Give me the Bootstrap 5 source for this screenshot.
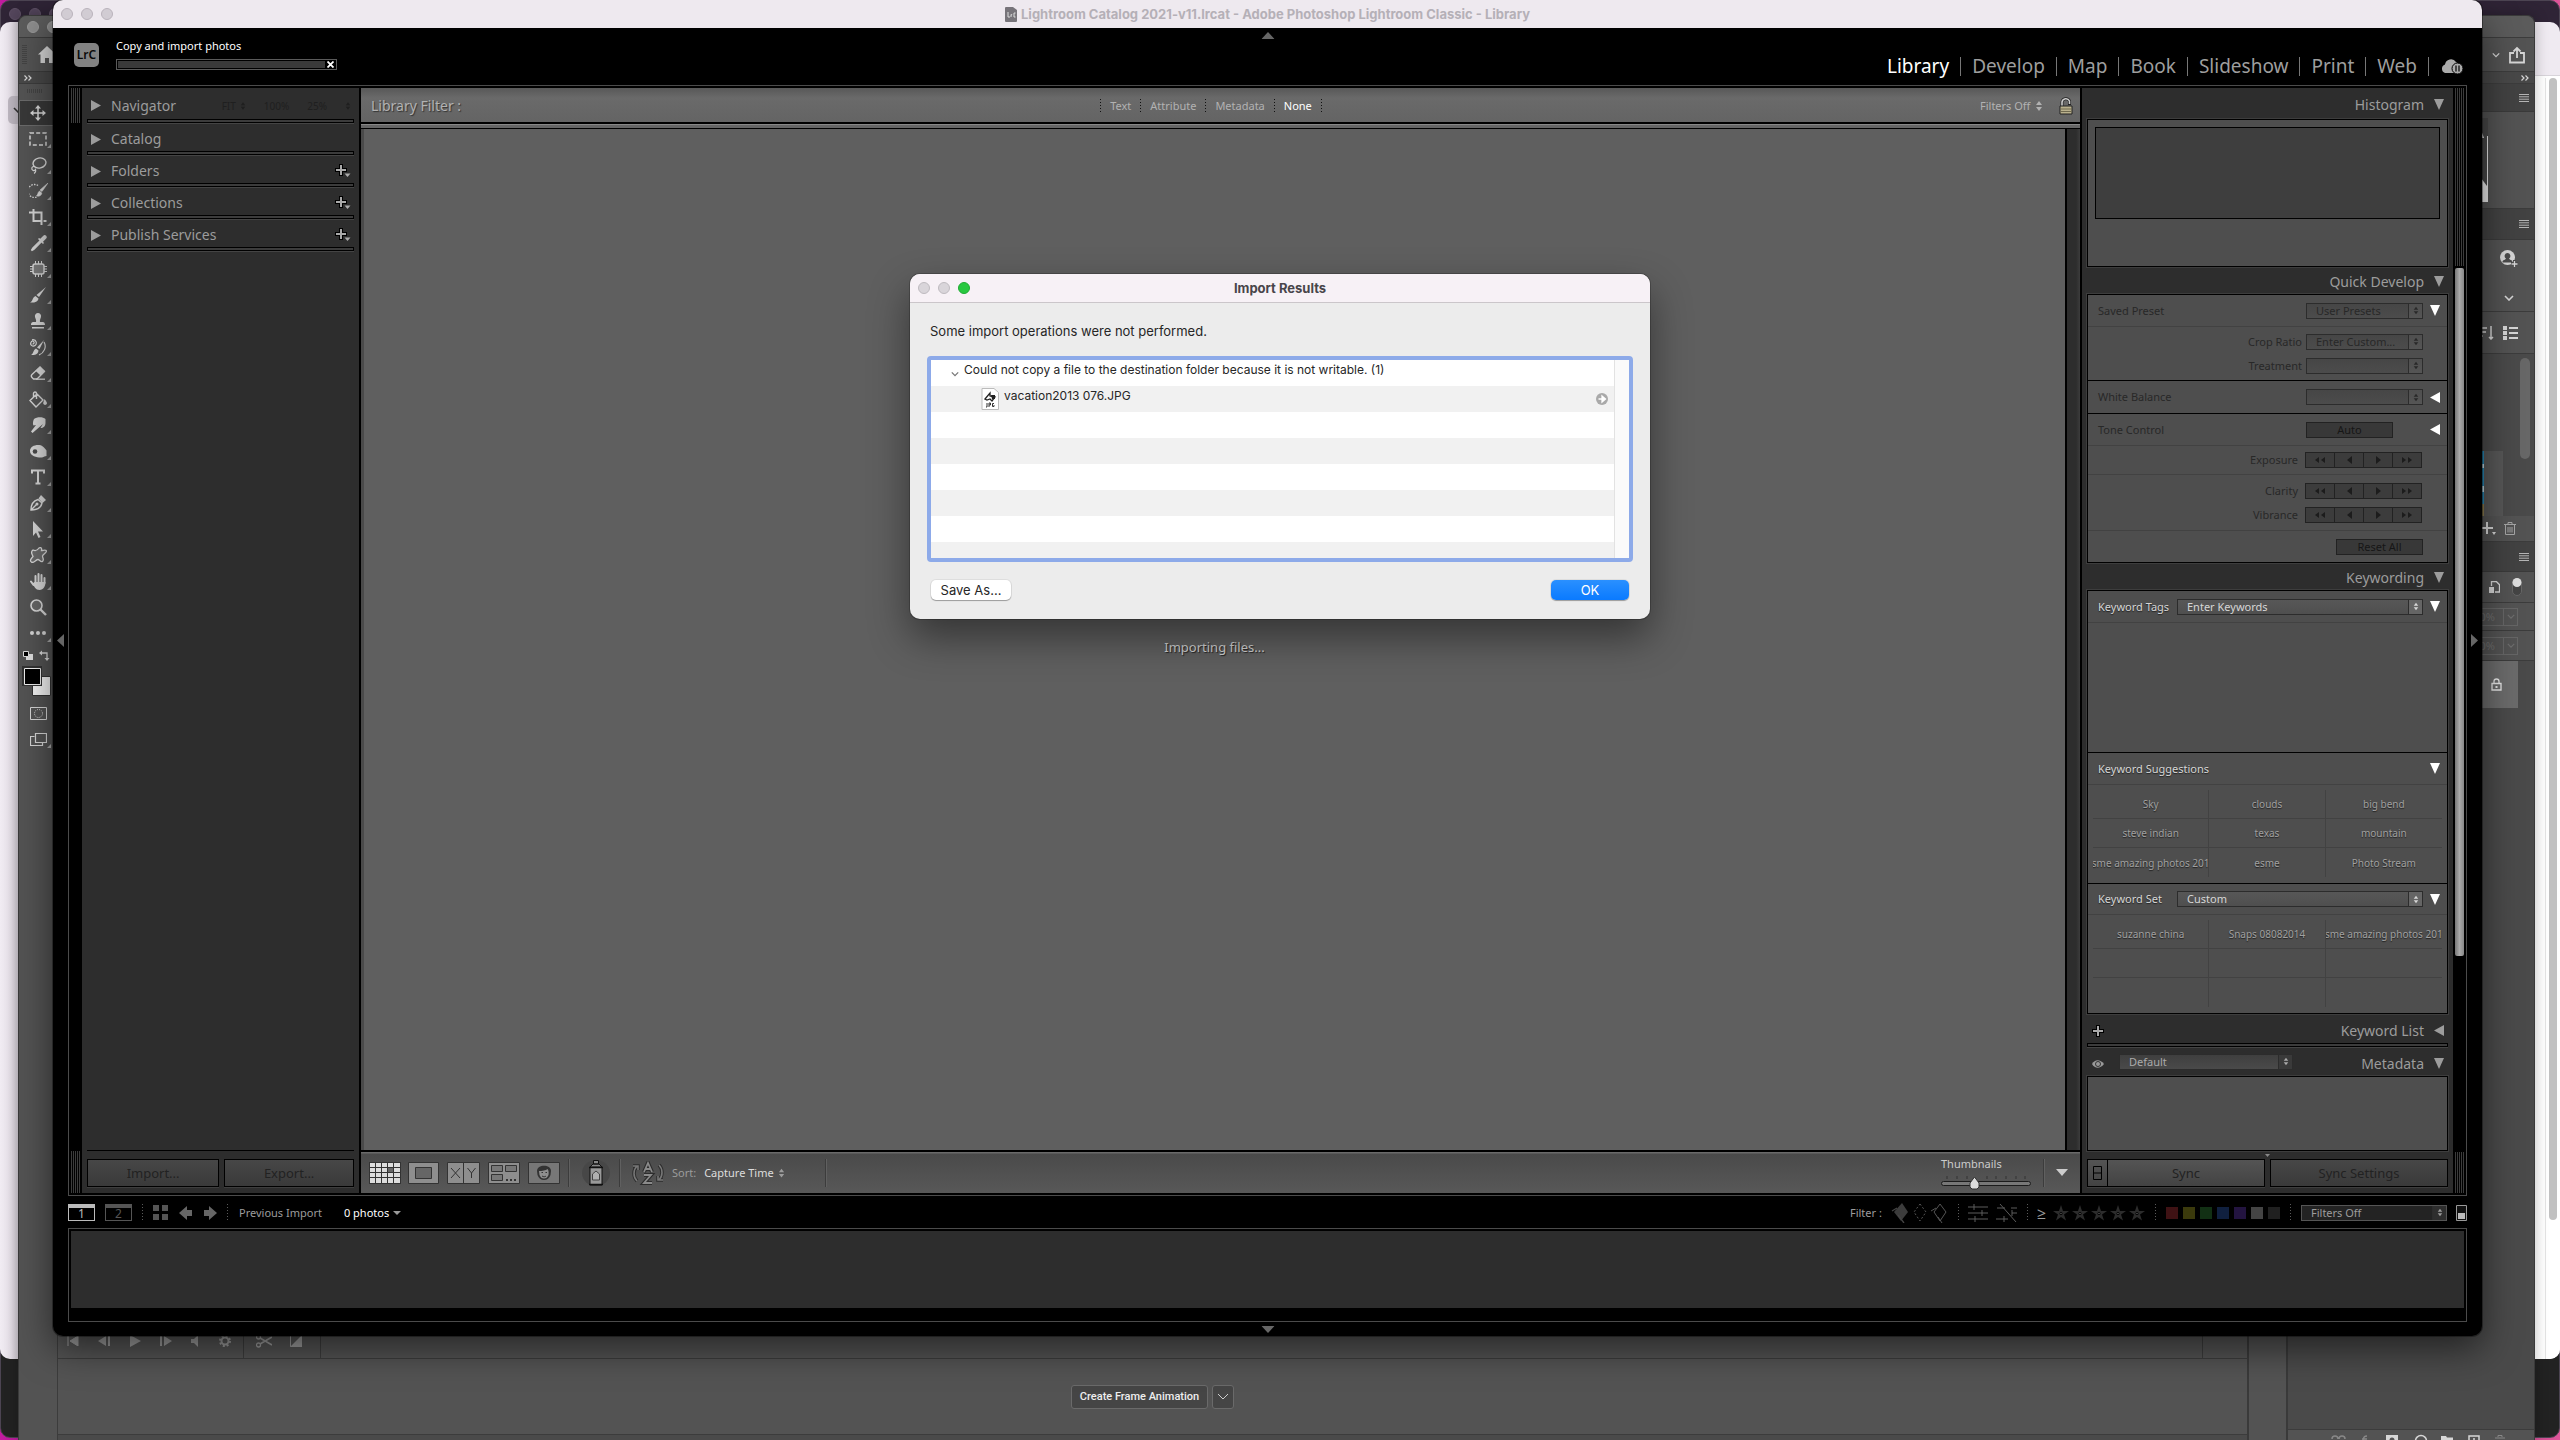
<!DOCTYPE html>
<html lang="en">
<head>
<meta charset="utf-8">
<meta name="viewport" content="width=device-width, initial-scale=1">
<title>Lightroom Catalog 2021-v11.lrcat - Adobe Photoshop Lightroom Classic - Library</title>
<link href="https://cdn.jsdelivr.net/npm/bootstrap@5.3.0/dist/css/bootstrap.min.css" rel="stylesheet">
<style>
  :root { --lr: "Noto Sans", "Open Sans", sans-serif; --mac: Inter, "Liberation Sans", sans-serif; }
  body { font-family: var(--lr); font-size: 11px; line-height: 16px; background: #14062e; }
  svg { display: block; flex: none; }
  button, select, input { font: inherit; color: inherit; }
  button { background: none; border: 0; padding: 0; }
  a { color: inherit; text-decoration: none; }
  h1, h2, h3, p { margin: 0; font-size: inherit; line-height: inherit; font-weight: inherit; }
  .desk { height: 100vh; min-height: 1300px; background: linear-gradient(90deg, #c21ca0, #14062e 10%, #14062e 90%, #e0559a); }
  .win { position: absolute; }
  .lights { gap: 8px; }
  .lights i { width: 12px; height: 12px; border-radius: 50%; background: #d1ccd3; border: 1px solid #b9b3bb; }

  /* browser windows at the back */
  .win-dark { inset: 0 0 2px 0; background: linear-gradient(#2f2436 0 60px, #222 60px); border: 1px solid #4c4452; border-radius: 10px; }
  .win-dark .lights { padding: 7px 8px; }
  .win-dark .lights i { background: #54465c; border-color: #5f5166; }
  .win-light { inset: 22px 0 81px 0; border-radius: 10px; background: linear-gradient(90deg, #f1ecf3, #e6e0e8 10px, #d0cad2 18px, #efeaf1 40px); overflow: hidden; }
  .win-light .chip { width: 24px; height: 28px; margin: 74px 0 0 8px; padding-left: 5px; border-radius: 5px; background: #bdb7c0; color: #333; }
  .web { width: 40px; background: #fff; margin-top: 53px; border-top: 1px solid #d8d4da; padding: 2px 3px 0 0; }
  .web .track { width: 12px; border-left: 1px solid #e4e4e4; padding-left: 3px; }
  .web .thumb { width: 8px; height: 1142px; border-radius: 4px; background: #c1c1c1; }

  /* Photoshop */
  .win-ps { inset: 15px 25px 0 18px; background: #535353; border: 1px solid #3a3a3a; border-bottom: 0; border-radius: 8px 8px 0 0; color: #d6d6d6; box-shadow: 0 0 14px rgba(0,0,0,.25); }
  .ps-title { height: 22px; background: #5b5b5b; border-bottom: 1px solid #3c3c3c; border-radius: 8px 8px 0 0; padding: 5px 8px; }
  .ps-title .lights i { background: #8c8c8c; border-color: #989898; }
  .ps-opts { height: 34px; border-bottom: 1px solid #3c3c3c; padding: 0 8px 0 3px; }
  .ps-opts .grip { width: 5px; height: 20px; margin-right: 11px; background: repeating-linear-gradient(#434343 0 1px, transparent 1px 2px); }
  .ps-tools { width: 39px; border-right: 1px solid #3c3c3c; }
  .ps-more { height: 12px; background: #484848; border-bottom: 1px solid #3c3c3c; padding: 0 5px; }
  .ps-tools .grip { width: 16px; height: 4px; margin: 5px 0 7px 8px; background: repeating-linear-gradient(90deg, #434343 0 1px, transparent 1px 2px); }
  .tool { height: 26px; width: 100%; position: relative; }
  .tool.on { background: #383838; outline: 1px solid #6a6a6a; outline-offset: -1px; }
  .tool.sub::after { content: ""; position: absolute; right: 6px; bottom: 4px; border: 2px solid transparent; border-right-color: #aaa; border-bottom-color: #aaa; }
  .swatches { height: 46px; margin-bottom: 8px; padding: 4px 2px 0 2px; }
  .ps-play { height: 36px; border-bottom: 1px solid #3c3c3c; padding-left: 9px; gap: 12px; color: #9c9c9c; }
  .ps-play .wall { width: 1px; height: 36px; background: #3c3c3c; }
  .ps-play .sp { margin-left: 6px; }
  .ps-anim { height: 75px; }
  .ps-btn { height: 24px; border: 1px solid #6a6a6a; border-radius: 3px; background: #454545; color: #eee; font: 500 11px/20px Roboto, sans-serif; }
  .ps-foot { height: 6px; background: #4a4a4a; border-top: 1px solid #3c3c3c; }
  .ps-dock { width: 41px; border: solid #3a3a3a; border-width: 0 2px; }
  .ps-right { width: 246px; background: #4a4a4a; }
  .ps-right > div { display: flex; align-items: center; justify-content: flex-end; flex: none; }
  .ps-tab { background: #424242; border-bottom: 1px solid #3a3a3a; padding-right: 5px; color: #b5b5b5; }
  .ps-pane { background: #535353; border-bottom: 1px solid #3c3c3c; }
  .pct { width: 60px; height: 18px; border: 1px solid #666; color: #6e6e6e; }
  .pct .b { border-left: 1px solid #666; width: 14px; height: 16px; }
  .layer { width: 100px; height: 47px; background: #6b6b6b; padding-right: 16px; }

  /* Lightroom */
  .win-lr { inset: 0 78px 104px 53px; background: #000; border-radius: 10px; overflow: hidden; box-shadow: 0 0 0 1px rgba(0,0,0,.35); color: #9c9c9c; }
  .lr-shade { inset: 10px 78px 104px 53px; border-radius: 10px; box-shadow: 0 12px 36px rgba(0,0,0,.55); }
  .lr-title { height: 28px; background: #eee9ef; padding: 0 8px; }
  .lr-title h1 { font: 700 13px/28px var(--mac); color: #b5b0b7; }
  .mid-title { padding-right: 52px; }
  .lr-head { height: 57px; padding: 0 18px 0 21px; }
  .logo { width: 25px; height: 24px; border-radius: 5px; background: #828282; color: #0a0a0a; font: 600 12px/24px var(--lr); margin-top: 15px; }
  .task { width: 221px; margin: 9px 0 0 17px; color: #fff; line-height: 18px; }
  .task .barline { height: 11px; margin-top: 4px; border: 1px solid #5a5a5a; padding: 1px; }
  .task .fillbar { background: #3a3a3a; height: 7px; }
  .task button { padding: 0 1px 0 2px; }
  .modules { font-size: 19px; line-height: 26px; gap: 11px; margin-top: 25px; height: 26px; }
  .modules a { color: #9e9e9e; }
  .modules a.on { color: #fff; }
  .modules i { width: 1px; height: 19px; background: #777; }
  .frame { margin: 0 15px; border: 1px solid #4b4b4b; padding: 2px; }
  .rail { width: 11px; }
  .stripes { width: 9px; background: repeating-linear-gradient(90deg, #3c3c3c 0 1px, #000 1px 2px); }
  .side { background: #2d2d2d; }
  .side-l { width: 277px; padding: 0 5px; }
  .side-r { width: 371px; padding: 0 5px; }
  .groove { height: 4px; border: 1px solid #000; background: #3c3c3c; box-shadow: 0 1px #444; }
  .phead { height: 28px; font-size: 14px; }
  .side-l .phead { padding: 4px 3px 0 4px; gap: 10px; }
  .side-r .phead { height: 27px; padding: 2px 4px 0 5px; gap: 10px; }
  .side-r .phead.h29 { height: 29px; padding-top: 4px; }
  .side-l .h31, .side-r .h31 { height: 31px; }
  .ghost { color: #1f1f1f; font-size: 10px; gap: 18px; }
  .btnrow { gap: 5px; padding-bottom: 6px; }
  .lrbtn { height: 28px; border: 1px solid #000; background: linear-gradient(#474747, #3a3a3a); color: #222; font-size: 13px; line-height: 26px; box-shadow: 0 1px #3e3e3e; }
  .lrbtn.lit { background: linear-gradient(#545454, #434343); }
  .well { border: 1px solid #000; background: #4e4e4e; outline: 1px solid #3d3d3d; }
  .histo { height: 148px; padding: 7px; }
  .histo div { height: 92px; background: #3e3e3e; border: 1px solid #000; }
  .rowx { padding: 0 7px 0 10px; gap: 7px; }
  .r29 { height: 29px; } .r31 { height: 31px; } .r32 { height: 32px; } .r33 { height: 33px; } .r54 { height: 54px; } .r56 { height: 56px; }
  .endgap { padding-right: 24px; }
  .thin { border-bottom: 1px solid #424242; }
  .thick { border-bottom: 1px solid #000; }
  .dim { color: #282828; }
  .bright { color: #d6d6d6; text-shadow: 0 1px 1px #222; }
  .pick { height: 16px; border: 1px solid #2c2c2c; background: linear-gradient(#464646, #4c4c4c); }
  .pick select, .bare { appearance: none; background: transparent; border: 0; padding: 0 0 0 9px; line-height: 14px; min-width: 0; outline: 0; opacity: 1; }
  .bare { padding: 0; }
  .pick span { width: 14px; border-left: 1px solid #2c2c2c; background: rgba(255,255,255,.05); }
  .pick.sm { width: 117px; }
  .pick.wide { width: 246px; }
  .pick.light { background: linear-gradient(#575757, #4f4f4f); }
  .pick.light span { background: #656565; }
  .pick.meta { width: 174px; font-size: 11px; color: #aaa; background: linear-gradient(#3f3f3f, #4a4a4a); }
  .pick.meta span { background: #3a3a3a; }
  .pick.flt { width: 146px; border-color: #555; background: #232323; }
  .sbtn { height: 16px; border: 1px solid #222; background: #383838; color: #161616; width: 87px; line-height: 13px; }
  .steps { width: 117px; height: 16px; border: 1px solid #222; background: #3c3c3c; color: #1c1c1c; margin-right: 18px; }
  .steps button { flex: 1; display: flex; align-items: center; justify-content: center; }
  .steps button + button { border-left: 1px solid #222; }
  .kgrid { display: grid; grid-template-columns: repeat(3, 1fr); margin: 5px 5px 6px; grid-auto-rows: 29px; font-size: 10px; }
  .kgrid button { display: flex; align-items: center; justify-content: center; overflow: hidden; white-space: nowrap; color: #a0a0a0; text-shadow: 0 1px 1px #222; border: solid #424242; border-width: 0 1px 1px 0; }
  .kgrid button:nth-child(3n) { border-right: 0; }
  .kgrid button:nth-child(n+7) { border-bottom: 0; }
  .fbar { height: 41px; background: linear-gradient(#585858, #6a6a6a 10px, #646464 34px, #000 34px 36px, #888 36px 37px, #666 37px 40px, #000 40px); color: #b2b2b2; text-shadow: 1px 1px 1px #333; padding: 0 7px 6px 10px; }
  .fbar .big { font-size: 14px; }
  .fbar .mid { gap: 8px; margin-right: 22px; }
  .dots { width: 1px; background: repeating-linear-gradient(currentColor 0 1px, transparent 1px 3px); }
  .fbar .dots { height: 14px; color: #111; margin: 0 1px; }
  .stage { background: #5f5f5f; border-left: 3px solid #4a4a4a; }
  .stage p { margin-top: 510px; font-size: 13px; color: #d0d0d0; text-shadow: 1px 1px 1px #222; }
  .gutter { width: 15px; border-left: 2px solid #000; background: linear-gradient(90deg, #2d2d2d 70%, #3c3c3c); }
  .tbar { height: 43px; border-top: 2px solid #000; background: linear-gradient(#6a6a6a 0 1px, #4a4a4a 2px, #585858); padding: 0 12px 0 8px; }
  .tbar .wall { width: 1px; height: 28px; background: #3c3c3c; box-shadow: 1px 0 #606060; }
  .foot { height: 32px; margin: 0 15px; padding-top: 1px; }
  .foot .dots { height: 18px; color: #5a5a5a; }
  .foot .m { margin: 0 10px; }
  .mon { width: 27px; height: 17px; border: 1px solid #555; border-top-width: 4px; color: #555; font-size: 12px; line-height: 12px; }
  .mon.on { border-color: #bbb; color: #bbb; }
  .sw { width: 12px; height: 12px; }
  .film { height: 94px; margin: 0 15px 14px; border: 1px solid #4b4b4b; padding: 2px 2px 13px; }
  .film div { background: #2d2d2d; height: 100%; }
  .edge { position: absolute; color: #666; }

  /* dialog */
  .dlg { position: absolute; top: 274px; left: 910px; width: 740px; border-radius: 10px; background: #ececec; color: #262626; font: 13px/20px var(--mac); box-shadow: 0 0 0 1px rgba(0,0,0,.2), 0 18px 40px rgba(0,0,0,.45); }
  .dlg-t { height: 29px; background: #f7f1f6; border-bottom: 1px solid #cbc6ca; border-radius: 10px 10px 0 0; padding: 0 8px; }
  .dlg-t h2 { font-weight: 700; color: #48454a; line-height: 27px; }
  .dlg-t .lights i { background: #d9d5da; border-color: #bfbbc0; }
  .dlg-t .lights i.go { background: #28c840; border-color: #1fab32; }
  .dlg-b { padding: 18px 17px 19px; }
  .results { margin-top: 15px; border: 4px solid #8daae9; border-radius: 4px; height: 206px; background: #fff; font-size: 12px; }
  .rows { background: repeating-linear-gradient(#fff 0 26px, #f1f1f1 26px 52px); border-right: 1px solid #e2e2e2; }
  .rline { height: 26px; gap: 5px; padding: 0 6px 0 20px; }
  .rline.kid { padding-left: 50px; }
  .macbtn { height: 20px; border-radius: 5px; background: #fff; width: 80px; line-height: 18px; box-shadow: 0 0 0 1px rgba(0,0,0,.06), 0 1px 1px rgba(0,0,0,.3); }
  .macbtn.ok { width: 78px; color: #fff; background: linear-gradient(#2a90ff, #0a7aff); }
</style>
</head>
<body>
<svg width="0" height="0" class="position-absolute" aria-hidden="true">
  <defs>
    <symbol id="ud" viewBox="0 0 8 10"><path d="M4 0 7 4H1zM4 10 1 6h6z" fill="currentColor"/></symbol>
    <symbol id="dn" viewBox="0 0 10 11"><path d="M0 0h10L5 11z" fill="currentColor"/></symbol>
    <symbol id="rt" viewBox="0 0 10 11"><path d="M0 0 10 5.500 0 11z" fill="currentColor"/></symbol>
    <symbol id="lf" viewBox="0 0 10 11"><path d="M10 0v11L0 5.500z" fill="currentColor"/></symbol>
    <symbol id="s1l" viewBox="0 0 5 8"><path d="M5 0v8L0 4z" fill="currentColor"/></symbol>
    <symbol id="s1r" viewBox="0 0 5 8"><path d="M0 0v8l5-4z" fill="currentColor"/></symbol>
    <symbol id="s2l" viewBox="0 0 10 6"><path d="M4 0v6L0 3zM10 0v6L6 3z" fill="currentColor"/></symbol>
    <symbol id="s2r" viewBox="0 0 10 6"><path d="M0 0v6l4-3zM6 0v6l4-3z" fill="currentColor"/></symbol>
    <symbol id="plus" viewBox="0 0 16 14"><path d="M6 1v12M0 7h12" stroke="#000" stroke-width="4"/><path d="M6 2v10M1 7h10" stroke="#aaa" stroke-width="2"/></symbol>
    <symbol id="plusd" viewBox="0 0 16 14"><path d="M6 0v12M0 6h12" stroke="#000" stroke-width="4"/><path d="M6 1v10M1 6h10" stroke="#aaa" stroke-width="2"/><path d="M9.500 9.500h6L12.500 13z" fill="#aaa"/></symbol>
    <symbol id="chev" viewBox="0 0 10 6"><path d="M1 1l4 4 4-4" fill="none" stroke="currentColor" stroke-width="1.600"/></symbol>
    <symbol id="ham" viewBox="0 0 10 8"><path d="M0 .5h10M0 2.800h10M0 5.200h10M0 7.500h10" stroke="currentColor"/></symbol>
    <symbol id="raq" viewBox="0 0 8 6"><path d="M.5.500 3 3 .5 5.500M4.500.500 7 3 4.500 5.500" fill="none" stroke="currentColor" stroke-width="1.200"/></symbol>
    <symbol id="star" viewBox="0 0 16 16"><path d="M8 0l2 6h6l-5 3.500 2 6L8 12l-5 3.500 2-6L0 6h6z" fill="#2c2c2c"/><circle cx="8" cy="8.500" r="1.500" fill="#000"/><circle cx="8" cy="8.500" r=".6" fill="#888"/></symbol>
    <symbol id="page" viewBox="0 0 12 15"><path d="M1 0h7l4 3v11a1 1 0 0 1-1 1H1a1 1 0 0 1-1-1V1a1 1 0 0 1 1-1z" fill="#77747a"/><path d="M3 5v5h2M6 10V7.500M6 8l1.200-.5M10.500 6H9v4h1.500" fill="none" stroke="#ddd"/></symbol>
  </defs>
</svg>

<div class="desk position-relative overflow-hidden">

  <div class="win win-dark" aria-hidden="true"><div class="lights d-flex"><i></i><i></i><i></i></div></div>
  <div class="win win-light d-flex justify-content-between" aria-hidden="true">
    <div class="chip d-flex align-items-center"><svg width="10" height="6"><use href="#chev"/></svg></div>
    <div class="web d-flex justify-content-end"><div class="track"><div class="thumb"></div></div></div>
  </div>

  <!-- Photoshop window -->
  <section class="win win-ps d-flex flex-column" aria-label="Photoshop">
    <div class="ps-title"><div class="lights d-flex"><i></i><i></i><i></i></div></div>
    <div class="ps-opts d-flex align-items-center justify-content-between">
      <div class="d-flex align-items-center"><span class="grip"></span>
        <svg width="18" height="17" viewBox="0 0 18 17"><path d="M9 0 0 8.500h2.500V17h4.500v-5h4v5h4.500V8.500H18z" fill="#d6d6d6"/></svg></div>
      <div class="d-flex align-items-center gap-2"><svg width="8" height="6"><use href="#chev"/></svg>
        <svg width="18" height="18" viewBox="0 0 18 18"><path d="M6 7H2v9.500h14V7h-4M9 12V2M5.500 5.500 9 2l3.500 3.500" fill="none" stroke="#d6d6d6" stroke-width="1.800"/></svg></div>
    </div>
    <div class="d-flex flex-grow-1">
      <nav class="ps-tools" aria-label="Tools">
        <div class="ps-more d-flex align-items-center"><svg width="8" height="6"><use href="#raq"/></svg></div>
        <div class="grip"></div>
        <button class="tool on d-flex align-items-center justify-content-center" aria-label="Move"><svg width="16" height="16" viewBox="0 0 16 16"><path d="M8 2v12M2 8h12" stroke="#d6d6d6" stroke-width="1.500"/><path d="M8 0l3 3.500H5zM8 16l3-3.500H5zM0 8l3.500-3v6zM16 8l-3.500-3v6z" fill="#d6d6d6"/></svg></button>
        <button class="tool sub d-flex align-items-center justify-content-center" aria-label="Marquee"><svg width="18" height="14" viewBox="0 0 18 14"><path d="M1 1h16v12H1z" fill="none" stroke="#d6d6d6" stroke-width="1.500" stroke-dasharray="4 2.200"/></svg></button>
        <button class="tool sub d-flex align-items-center justify-content-center" aria-label="Lasso"><svg width="17" height="17" viewBox="0 0 17 17"><ellipse cx="9.500" cy="6" rx="6.500" ry="5" transform="rotate(-12 9.500 6)" fill="none" stroke="#d6d6d6" stroke-width="1.400"/><path d="M4 9.500a2 2 0 1 0 1.500 3C6 14 5.500 15.500 4 16.500" fill="none" stroke="#d6d6d6" stroke-width="1.200"/></svg></button>
        <button class="tool sub d-flex align-items-center justify-content-center" aria-label="Object selection"><svg width="19" height="16" viewBox="0 0 19 16"><path d="M9 2.500A6.500 6.500 0 1 0 8 14" fill="none" stroke="#d6d6d6" stroke-width="1.300" stroke-dasharray="1.500 1.200"/><path d="M19 0 13 8.500l-2-1.500zM10.500 8l2.300 2c-.5 3-3 3.500-5.300 3 1.500-1 1-3.500 3-5z" fill="#d6d6d6" stroke="#d6d6d6" stroke-width=".6"/></svg></button>
        <button class="tool sub d-flex align-items-center justify-content-center" aria-label="Crop"><svg width="18" height="17" viewBox="0 0 18 17"><path d="M4.500 0v12H13M0 3.500h12.500V16" fill="none" stroke="#d6d6d6" stroke-width="2"/><path d="M14.500 11h3v2h-3z" fill="#d6d6d6"/></svg></button>
        <button class="tool sub d-flex align-items-center justify-content-center" aria-label="Eyedropper"><svg width="17" height="17" viewBox="0 0 17 17"><path d="M11 5 3 13l-1.500 2.500L4 14l8-8" fill="none" stroke="#d6d6d6" stroke-width="1.600"/><path d="M8 4l5 5 1-1-1-1.300 3-3A2 2 0 0 0 13.300.7l-3 3L9 2.900z" fill="#d6d6d6"/></svg></button>
        <button class="tool sub d-flex align-items-center justify-content-center" aria-label="Healing"><svg width="17" height="16" viewBox="0 0 17 16"><rect x="3" y="3" width="11" height="10" rx="2" fill="#7a7a7a" stroke="#d6d6d6" stroke-width="1.500"/><path d="M5.500 0v3M8.500 0v3M11.500 0v3M5.500 13v3M8.500 13v3M11.500 13v3M0 5.500h3M0 8h3M0 10.500h3M14 5.500h3M14 8h3M14 10.500h3" stroke="#d6d6d6"/></svg></button>
        <button class="tool sub d-flex align-items-center justify-content-center" aria-label="Brush"><svg width="16" height="16" viewBox="0 0 16 16"><path d="M16 0 9 10 6.500 8zM5.500 9l3 2.500C8 15 4 16 0 15.500 3 14.500 2 10.500 5.500 9z" fill="#d6d6d6"/></svg></button>
        <button class="tool sub d-flex align-items-center justify-content-center" aria-label="Stamp"><svg width="16" height="16" viewBox="0 0 16 16"><path d="M8 0a3.200 3.200 0 0 1 3 4c-.5 2-1.500 3-1 5h3c2 0 2 3 2 3H1s0-3 2-3h3c.5-2-.5-3-1-5a3.200 3.200 0 0 1 3-4zM2 14h12v1.500H2z" fill="#d6d6d6"/></svg></button>
        <button class="tool sub d-flex align-items-center justify-content-center" aria-label="History brush"><svg width="18" height="17" viewBox="0 0 18 17"><path d="M3.500 5a1.500 1.500 0 1 0-1-2.500C0 6 4 8 6 6.500S8 0 3 .8M15 3c3 5 0 11-5 13" fill="none" stroke="#d6d6d6" stroke-width="1.200"/><path d="M15 1 10.500 10 8 8.500zM7 9.500l2.500 2C9 15.500 6 16.500 2 16c2.500-1 2-5 5-6.500z" fill="#d6d6d6"/></svg></button>
        <button class="tool sub d-flex align-items-center justify-content-center" aria-label="Eraser"><svg width="17" height="14" viewBox="0 0 17 14"><path d="M10 1 2 8.500c-1 1-1 2 0 3L3.500 13H7l7.500-7.500z" fill="none" stroke="#d6d6d6" stroke-width="1.300"/><path d="M10 .5 5.500 4.700l5 4.700L15 5z" fill="#d6d6d6"/><path d="M6 13.200h9" stroke="#d6d6d6" stroke-width="1.300"/></svg></button>
        <button class="tool sub d-flex align-items-center justify-content-center" aria-label="Paint bucket"><svg width="18" height="17" viewBox="0 0 18 17"><path d="M8 3l6 6-7 7-6-6.500zM4.500 7V2.500a1.500 1.500 0 0 1 3 0V8" fill="none" stroke="#d6d6d6" stroke-width="1.400"/><path d="M15.500 8c1.500 2 2.500 3 2.500 4.500a2 2 0 0 1-3.800 0c0-1.500.8-2.500 1.300-4.500z" fill="#d6d6d6"/></svg></button>
        <button class="tool sub d-flex align-items-center justify-content-center" aria-label="Smudge"><svg width="15" height="16" viewBox="0 0 15 16"><path d="M3 2c3-2.500 9-2.500 11.500 0v4c0 3-2 5-5 5l2.500-4L5 13l-3.500 3L0 14.500 5 8 2.500 8.500C1.500 7 2 4 3 2z" fill="#d6d6d6"/></svg></button>
        <button class="tool sub d-flex align-items-center justify-content-center" aria-label="Dodge"><svg width="17" height="13" viewBox="0 0 17 13"><path d="M0 6C0 2 4 0 8 0s6 2 8.500 5.500V11c-2 0-2 1-4.500 1.500S0 12 0 6z" fill="#d6d6d6"/><circle cx="5" cy="6.500" r="2.300" fill="#4b4b4b"/></svg></button>
        <button class="tool sub d-flex align-items-center justify-content-center" aria-label="Type"><svg width="14" height="16" viewBox="0 0 14 16"><path d="M1 4.500V1.500h12v3M7 1.500v13M4.500 14.500h5" fill="none" stroke="#d6d6d6" stroke-width="2"/></svg></button>
        <button class="tool sub d-flex align-items-center justify-content-center" aria-label="Pen"><svg width="16" height="16" viewBox="0 0 16 16"><path d="M1 15c0-5 2-9 7-10.500L12 8c-1 5-5 7-11 7zM1 15l5.500-5.500" fill="none" stroke="#d6d6d6" stroke-width="1.400"/><path d="M8.500 3.500 11 0l5 5-3.500 3z" fill="#d6d6d6"/><circle cx="7" cy="9" r="1.500" fill="#d6d6d6"/></svg></button>
        <button class="tool sub d-flex align-items-center justify-content-center" aria-label="Path selection"><svg width="12" height="17" viewBox="0 0 12 17"><path d="M1 0v15l3-3.500L6.500 17l2-1L6 10.500h5z" fill="#d6d6d6"/></svg></button>
        <button class="tool sub d-flex align-items-center justify-content-center" aria-label="Shape"><svg width="18" height="16" viewBox="0 0 18 16"><path d="M4 3c2 1 4 1 6-2 2-1 3 0 2.500 2.500 2 0 4.500-1 5 .5S14 7 13.500 9c0 2 2 3.500 0 5.500-2 1-3-2-4.500-2-2 0-3 3-6 3-3-1.500-1-4 1-6C3 7 1 5 4 3z" fill="#6a6a6a" stroke="#d6d6d6" stroke-width="1.300"/></svg></button>
        <button class="tool sub d-flex align-items-center justify-content-center" aria-label="Hand"><svg width="17" height="17" viewBox="0 0 17 17"><path d="M3.500 12 1 8.500M5.500 10V3M8.500 9V1M11.500 9V2M14.500 10V5" stroke="#d6d6d6" stroke-width="2" stroke-linecap="round" fill="none"/><path d="M2.500 10.500 4.500 9h11c0 4-2 8-6 8-4 0-5-3-7-6.500z" fill="#d6d6d6"/></svg></button>
        <button class="tool d-flex align-items-center justify-content-center" aria-label="Zoom"><svg width="17" height="17" viewBox="0 0 17 17"><circle cx="6.500" cy="6.500" r="5.500" fill="#666" stroke="#d6d6d6" stroke-width="1.600"/><path d="M10.500 10.500l5.500 5.500" stroke="#d6d6d6" stroke-width="2.400"/></svg></button>
        <button class="tool sub d-flex align-items-center justify-content-center" aria-label="More"><svg width="16" height="4" viewBox="0 0 16 4"><circle cx="2" cy="2" r="2" fill="#d6d6d6"/><circle cx="8" cy="2" r="2" fill="#d6d6d6"/><circle cx="14" cy="2" r="2" fill="#d6d6d6"/></svg></button>
        <div class="swatches"><svg width="30" height="46" viewBox="0 0 30 46"><path d="M5 4h7v6H5z" fill="#ddd"/><path d="M2.500 1.500h5v5h-5z" fill="#000" stroke="#ddd"/><path d="M20 3h6v6" fill="none" stroke="#d6d6d6" stroke-width="1.300"/><path d="M18 3l3-2.500v5zM26 11l-2.500-3h5z" fill="#d6d6d6"/><path d="M11.500 26.500h18v19h-18z" fill="#f4f4f4" stroke="#333"/><path d="M2 17h18v18H2z" fill="#000" stroke="#333" stroke-width="2"/><path d="M3.500 18.500h16v16h-16z" fill="#000" stroke="#eee"/></svg></div>
        <button class="tool d-flex align-items-center justify-content-center" aria-label="Quick mask"><svg width="17" height="13" viewBox="0 0 17 13"><path d="M.5.500h16v12H.5z" fill="none" stroke="#d6d6d6"/><circle cx="8.500" cy="6.500" r="4" fill="none" stroke="#d6d6d6" stroke-dasharray="1 1.100"/></svg></button>
        <button class="tool sub d-flex align-items-center justify-content-center" aria-label="Screen mode"><svg width="17" height="13" viewBox="0 0 17 13"><path d="M4.500 3.500h-4v9h12V10M5.500.500h11v9h-11z" fill="none" stroke="#d6d6d6" stroke-width="1.200"/></svg></button>
      </nav>
      <div class="flex-grow-1 d-flex flex-column justify-content-end">
        <div class="ps-play d-flex align-items-center">
          <svg width="12" height="10" viewBox="0 0 12 10"><path d="M1 0v10M11 0v10L3 5z" stroke="currentColor" fill="currentColor"/></svg>
          <svg class="sp" width="14" height="10" viewBox="0 0 14 10"><path d="M9 0v10L1 5zM11 0h2v10h-2z" fill="currentColor"/></svg>
          <svg class="sp" width="12" height="12" viewBox="0 0 12 12"><path d="M1 0l11 6-11 6z" fill="currentColor"/></svg>
          <svg class="sp" width="14" height="10" viewBox="0 0 14 10"><path d="M5 0v10l8-5zM1 0h2v10H1z" fill="currentColor"/></svg>
          <svg class="ms-1" width="10" height="12" viewBox="0 0 10 12"><path d="M2 4h3l4-4v12L5 8H2z" fill="currentColor"/></svg>
          <svg class="ms-2" width="12" height="12" viewBox="0 0 12 12"><circle cx="6" cy="6" r="3.500" fill="none" stroke="currentColor" stroke-width="2"/><circle cx="6" cy="6" r="5" fill="none" stroke="currentColor" stroke-width="2" stroke-dasharray="2 1.930"/></svg>
          <span class="wall"></span>
          <svg width="16" height="14" viewBox="0 0 16 14"><path d="M4 4l12 7M4 10 16 3" stroke="currentColor" stroke-width="1.600"/><circle cx="2.500" cy="3" r="2" fill="none" stroke="currentColor" stroke-width="1.300"/><circle cx="2.500" cy="11" r="2" fill="none" stroke="currentColor" stroke-width="1.300"/></svg>
          <svg class="sp" width="12" height="12" viewBox="0 0 12 12"><path d="M.5.500h11v11H.5z" fill="none" stroke="currentColor"/><path d="M12 0v12H0z" fill="currentColor"/></svg>
          <span class="wall sp"></span>
          <span class="wall ms-auto" style="margin-right:44px"></span>
        </div>
        <div class="ps-anim d-flex align-items-center justify-content-center gap-1">
          <button class="ps-btn px-2">Create Frame Animation</button>
          <button class="ps-btn px-1" aria-label="Timeline type"><svg width="12" height="7" viewBox="0 0 12 7"><path d="M1 1l5 5 5-5" fill="none" stroke="#ccc"/></svg></button>
        </div>
        <div class="ps-foot"></div>
      </div>
      <div class="ps-dock"></div>
      <div class="ps-right d-flex flex-column">
        <div class="ps-more"><svg width="8" height="6"><use href="#raq"/></svg></div>
        <div class="ps-tab" style="height:28px"><svg width="10" height="8"><use href="#ham"/></svg></div>
        <div class="ps-pane" style="height:97px"><svg width="53" height="84" viewBox="0 0 53 84"><path d="M0 0h7v84H0z" fill="#474747"/><path d="M0 12l3 8H0zM0 60l6 8V18h1v66H0z" fill="#e8e8e8"/></svg></div>
        <div class="ps-tab" style="height:31px"><svg width="10" height="8"><use href="#ham"/></svg></div>
        <div class="ps-pane" style="height:72px"><div class="d-flex flex-column align-items-center gap-4 pe-3"><svg width="18" height="17" viewBox="0 0 18 17"><circle cx="7.500" cy="7.500" r="7.500" fill="#d6d6d6"/><path d="M7.500 3a2.800 3 0 0 1 1.600 5.500c0 1.500 3.500 1 3.500 4H2.400c0-3 3.500-2.500 3.500-4A2.800 3 0 0 1 7.500 3z" fill="#4b4b4b"/><path d="M14.500 10v7M11 13.500h7" stroke="#4b4b4b" stroke-width="3"/><path d="M14.500 11v6M11.500 14h6" stroke="#d6d6d6" stroke-width="1.300"/></svg><svg class="mt-1" width="10" height="6"><use href="#chev"/></svg></div></div>
        <div class="ps-pane pe-3" style="height:42px"><svg class="me-2" width="14" height="14" viewBox="0 0 14 14"><path d="M0 2h6M0 6h5M0 10h2M10 0v13M8 11l2 2 2-2" fill="none" stroke="#d6d6d6" stroke-width="1.500"/></svg><svg width="15" height="14" viewBox="0 0 15 14"><path d="M0 0h4v4H0zM0 5h4v4H0zM0 10h4v4H0zM6 1h9v2H6zM6 6h9v2H6zM6 11h9v2H6z" fill="#d6d6d6"/></svg></div>
        <div class="pe-1 align-items-start" style="height:162px"><svg width="58" height="162" viewBox="0 0 58 162"><path d="M0 97h31v65H0z" fill="#575757"/><path d="M0 97h12v65H0z" fill="#2a86b0"/><path d="M0 110h12v4H0zM0 132h12v6H0z" fill="#b5d5e2"/><path d="M0 150h12v12H0z" fill="#8a7a50"/><rect x="48" y="4" width="10" height="101" rx="5" fill="#676767"/></svg></div>
        <div class="ps-pane" style="height:26px;padding-right:18px"><svg class="me-2" width="16" height="14"><path d="M7 0v12M1 6h12" stroke="#d6d6d6" stroke-width="2"/><path d="M12 10h4l-2 3z" fill="#d6d6d6"/></svg><svg width="12" height="13" viewBox="0 0 12 13"><path d="M0 2.500h12M4 2.500V.500h4v2M1.500 2.500v10h9v-10M4 5v5.500M6 5v5.500M8 5v5.500" fill="none" stroke="#a5a5a5"/></svg></div>
        <div class="ps-tab" style="height:30px"><svg width="10" height="8"><use href="#ham"/></svg></div>
        <div class="ps-pane pe-2 gap-2" style="height:31px"><svg class="me-1" width="12" height="13" viewBox="0 0 12 13"><path d="M3.500 5V.700h5l3 3V11H7" fill="none" stroke="#d6d6d6" stroke-width="1.300"/><path d="M1 6h5v6H1z" fill="#d6d6d6"/></svg><svg class="me-1" width="10" height="18" viewBox="0 0 10 18"><rect x=".5" y=".5" width="9" height="17" rx="4.500" fill="#444" stroke="#666"/><circle cx="5" cy="4.500" r="4.500" fill="#ddd"/></svg></div>
        <div class="ps-pane pe-3" style="height:28px"><div class="pct d-flex align-items-center justify-content-between"><span class="ms-auto pe-2">100%</span><span class="b d-flex align-items-center justify-content-center"><svg width="8" height="5"><use href="#chev"/></svg></span></div></div>
        <div class="ps-pane pe-3" style="height:30px"><div class="pct d-flex align-items-center justify-content-between"><span class="ms-auto pe-2">100%</span><span class="b d-flex align-items-center justify-content-center"><svg width="8" height="5"><use href="#chev"/></svg></span></div></div>
        <div class="pe-3"><div class="layer d-flex align-items-center justify-content-end"><svg width="11" height="13" viewBox="0 0 11 13"><path d="M1 5.500h9v6.500H1zM3 5.500V3.500a2.500 2.500 0 0 1 5 0v2" fill="none" stroke="#e6e6e6" stroke-width="1.300"/><path d="M4.500 8h2v2h-2z" fill="#e6e6e6"/></svg></div></div>
        <div class="mt-auto overflow-hidden align-items-start" style="height:11px;padding-right:29px;border-top:1px solid #3c3c3c;background:#535353"><svg width="174" height="10" viewBox="0 0 174 10" fill="none"><path d="M1 9a3 3 0 0 1 6 0M8 9a3 3 0 0 1 6 0" stroke="#888" stroke-width="1.500"/><path d="M32 10c1-3 1-4 4-4M31 9h5" stroke="#888" stroke-width="1.500"/><path d="M55 5h12v5H55z" fill="#d6d6d6"/><circle cx="61" cy="10" r="2.500" fill="#535353"/><circle cx="90" cy="11" r="5.500" stroke="#d6d6d6" stroke-width="1.500"/><path d="M110 6h5l1 1.500h6V10h-12z" fill="#d6d6d6"/><path d="M138 10V6h10v4M143 8v2" stroke="#d6d6d6" stroke-width="1.500"/><path d="M164 8h10M167 7V5.500h4V7" stroke="#888"/></svg></div>
      </div>
    </div>
  </section>

  <!-- Lightroom window -->
  <div class="win lr-shade" aria-hidden="true"></div>
  <main class="win win-lr d-flex flex-column">
    <div class="lr-title d-flex align-items-center">
      <div class="lights d-flex"><i></i><i></i><i></i></div>
      <div class="mx-auto mid-title d-flex align-items-center gap-1"><svg width="12" height="15"><use href="#page"/></svg><h1>Lightroom Catalog 2021-v11.lrcat - Adobe Photoshop Lightroom Classic - Library</h1></div>
    </div>
    <header class="lr-head d-flex">
      <div class="logo text-center">LrC</div>
      <div class="task"><div>Copy and import photos</div>
        <div class="barline d-flex align-items-center"><div class="fillbar flex-grow-1"></div><button aria-label="Cancel task"><svg width="7" height="7" viewBox="0 0 7 7"><path d="M.5.500l6 6M6.500.500l-6 6" stroke="#fff" stroke-width="1.800"/></svg></button></div>
      </div>
      <nav class="modules ms-auto d-flex align-items-center" aria-label="Modules">
        <a href="#" class="on">Library</a><i></i><a href="#">Develop</a><i></i><a href="#">Map</a><i></i><a href="#">Book</a><i></i><a href="#">Slideshow</a><i></i><a href="#">Print</a><i></i><a href="#">Web</a><i></i>
        <svg width="24" height="15" viewBox="0 0 24 15"><path d="M5 14a4.500 4.500 0 0 1 0-8.500A6 6 0 0 1 16 3a5 5 0 0 1 3 3l-4 8z" fill="#aaa"/><circle cx="17.500" cy="9.500" r="5.500" fill="#aaa" stroke="#000"/><path d="M16 6.500v6M19 6.500v6" stroke="#222" stroke-width="1.500"/></svg>
      </nav>
    </header>

    <div class="frame d-flex flex-grow-1">
      <div class="rail d-flex flex-column justify-content-between"><div class="stripes" style="height:35px"></div><div class="stripes" style="height:42px"></div></div>
      <aside class="side side-l d-flex flex-column">
        <h2 class="phead h31 d-flex align-items-center"><svg width="10" height="11"><use href="#rt"/></svg>Navigator
          <span class="ghost ms-auto d-flex align-items-center"><span class="d-flex align-items-center gap-1">FIT <svg width="6" height="8"><use href="#ud"/></svg></span><span>100%</span><span>25%</span><svg width="6" height="8"><use href="#ud"/></svg></span></h2>
        <div class="groove"></div>
        <h2 class="phead d-flex align-items-center"><svg width="10" height="11"><use href="#rt"/></svg>Catalog</h2>
        <div class="groove"></div>
        <h2 class="phead d-flex align-items-center"><svg width="10" height="11"><use href="#rt"/></svg>Folders<button class="ms-auto" aria-label="Add folder"><svg width="16" height="14"><use href="#plusd"/></svg></button></h2>
        <div class="groove"></div>
        <h2 class="phead d-flex align-items-center"><svg width="10" height="11"><use href="#rt"/></svg>Collections<button class="ms-auto" aria-label="Add collection"><svg width="16" height="14"><use href="#plusd"/></svg></button></h2>
        <div class="groove"></div>
        <h2 class="phead d-flex align-items-center"><svg width="10" height="11"><use href="#rt"/></svg>Publish Services<button class="ms-auto" aria-label="Add service"><svg width="16" height="14"><use href="#plusd"/></svg></button></h2>
        <div class="groove"></div>
        <div class="mt-auto thick"></div>
        <div class="btnrow d-flex pt-2"><button class="lrbtn flex-fill">Import...</button><button class="lrbtn flex-fill">Export...</button></div>
      </aside>

      <section class="flex-grow-1 d-flex flex-column" style="margin:0 2px">
        <div class="fbar d-flex align-items-center">
          <div class="big col">Library Filter :</div>
          <div class="mid d-flex align-items-center"><span class="dots"></span><button>Text</button><span class="dots"></span><button>Attribute</button><span class="dots"></span><button>Metadata</button><span class="dots"></span><button class="text-white">None</button><span class="dots"></span></div>
          <div class="col d-flex align-items-center justify-content-end">
            <select class="bare" aria-label="Filter preset"><option>Filters Off</option></select><svg class="ms-1 me-3" width="8" height="10"><use href="#ud"/></svg>
            <svg width="14" height="18" viewBox="0 0 14 18"><path d="M3 9V5a4 4 0 0 1 7.500-1v4" fill="none" stroke="#222" stroke-width="3"/><path d="M3 9V5a4 4 0 0 1 7.500-1v3" fill="none" stroke="#ccc" stroke-width="1.600"/><path d="M1 9h12v8H1z" fill="#b9b08c" stroke="#222"/><path d="M1.500 12h11M1.500 14.500h11" stroke="#6e684e"/></svg>
          </div>
        </div>
        <div class="d-flex flex-grow-1">
          <div class="stage flex-grow-1 d-flex justify-content-center"><p>Importing files...</p></div>
          <div class="gutter"></div>
        </div>
        <div class="tbar d-flex align-items-center">
          <button aria-label="Grid view"><svg width="32" height="22" viewBox="0 0 32 22"><path d="M0 0h32v22H0z" fill="#333"/><path d="M1 1h5v4H1zM7 1h5v4H7zM13 1h5v4h-5zM19 1h5v4h-5zM25 1h6v4h-6zM1 6h5v4H1zM7 6h5v4H7zM13 6h5v4h-5zM25 6h6v4h-6zM1 11h5v4H1zM7 11h5v4H7zM13 11h5v4h-5zM19 11h5v4h-5zM25 11h6v4h-6zM1 16h5v5H1zM7 16h5v5H7zM13 16h5v5h-5zM19 16h5v5h-5zM25 16h6v5h-6z" fill="#ddd"/><path d="M19 6h5v4h-5z" fill="#666"/></svg></button>
          <button style="margin-left:7px" aria-label="Loupe view"><svg width="31" height="22" viewBox="0 0 31 22"><path d="M.5.500h30v21H.5z" fill="#8e8e8e" stroke="#333"/><path d="M7.500 5.500h16v11h-16z" fill="#666" stroke="#333"/></svg></button>
          <button class="ms-2" aria-label="Compare view"><svg width="33" height="22" viewBox="0 0 33 22"><path d="M.5.500h32v21H.5z" fill="#8e8e8e" stroke="#333"/><path d="M16.500 0v22M4 6l9 10M13 6 4 16M20.500 6l4 5 4-5M24.500 11v5" stroke="#333" fill="none"/></svg></button>
          <button class="ms-2" aria-label="Survey view"><svg width="32" height="22" viewBox="0 0 32 22"><path d="M.5.500h31v21H.5z" fill="#8e8e8e" stroke="#333"/><path d="M3.500 3.500h11v6h-11zM17.500 3.500h11v6h-11zM3.500 12.500h11v6h-11z" fill="#777" stroke="#333"/><path d="M18 17h2v2h-2zM22 17h2v2h-2zM26 17h2v2h-2z" fill="#333"/></svg></button>
          <button class="ms-2" aria-label="People"><svg width="32" height="22" viewBox="0 0 32 22"><path d="M.5.500h31v21H.5z" fill="#777" stroke="#333"/><path d="M9 9c0-7 14-7 14 0l-.5 4c-1 3-3.500 5-6.500 5s-5.500-2-6.500-5z" fill="#333"/><path d="M11 9c3 0 7-.5 8.500-2 1 1 1.500 3 1 6-1 2.500-2.500 3.500-4.500 3.500s-3.500-1-4.500-3.500z" fill="#8e8e8e"/><path d="M13.500 10.500h1.500M17.500 10.500H19M14 14c1.500 1 3 1 4 0" stroke="#333" fill="none"/></svg></button>
          <span class="wall mx-2"></span>
          <button class="ms-1" aria-label="Painter"><svg width="30" height="28" viewBox="0 0 30 28"><ellipse cx="15" cy="14" rx="14" ry="13" fill="#474747"/><path d="M9 8h12v18H9z" fill="#999" stroke="#111"/><path d="M12.500 1.500h5V5h-5zM9 8l3-3h6l3 3z" fill="#888" stroke="#111"/><path d="M8 8.500h14M8 25.500h14" stroke="#111" stroke-width="1.500"/><path d="M15 12l3.500 3v6h-7v-6z" fill="#b0b0b0" stroke="#444"/></svg></button>
          <span class="wall mx-2"></span>
          <button class="ms-1" aria-label="Sort direction"><svg width="32" height="24" viewBox="0 0 32 24"><path d="M5 20C1 16 1 9 5 5M1 5h5v4M27 19c4-4 4-11 0-15M31 19h-5v-4" fill="none" stroke="#2c2c2c" stroke-width="3.500"/><path d="M5 20C1 16 1 9 5 5M1 5h5v4M27 19c4-4 4-11 0-15M31 19h-5v-4" fill="none" stroke="#777" stroke-width="1.600"/><path d="M12 11l4-9 4 9M13.500 8h5M12 14h7l-7 8h8" fill="none" stroke="#2c2c2c" stroke-width="4"/><path d="M12 11l4-9 4 9M13.500 8h5M12 14h7l-7 8h8" fill="none" stroke="#8a8a8a" stroke-width="1.800"/></svg></button>
          <label class="ms-2" for="sortby">Sort:</label><select id="sortby" class="bare ms-2" style="color:#ddd"><option>Capture Time</option></select><svg class="ms-1" width="7" height="10"><use href="#ud"/></svg>
          <span class="wall" style="margin-left:40px"></span>
          <div class="ms-auto d-flex align-items-center gap-2"><div style="color:#ccc"><label for="thumbs" class="d-block">Thumbnails</label>
            <div class="position-relative pt-1"><svg width="90" height="14" viewBox="0 0 90 14"><path d="M6 0v3M16 0v3M26 0v3M46 0v3M55 0v3M65 0v3M75 0v3M84 0v3" stroke="#333"/><rect x=".5" y="5.500" width="89" height="4" rx="2" fill="#777" stroke="#1c1c1c"/><path d="M33.500 1l4.500 6v4l-2 2h-5l-2-2V7z" fill="#ddd" stroke="#333"/></svg><input id="thumbs" type="range" class="position-absolute top-0 start-0 w-100 h-100 opacity-0" value="37"></div></div>
            <span class="wall ms-1"></span><svg class="ms-1" width="12" height="7" viewBox="0 0 12 7"><path d="M0 0h12L6 7z" fill="#ccc"/></svg></div>
        </div>
      </section>

      <aside class="side side-r d-flex flex-column">
        <h2 class="phead h31 d-flex align-items-center justify-content-end">Histogram<svg width="10" height="11"><use href="#dn"/></svg></h2>
        <div class="well histo"><div></div></div>
        <h2 class="phead d-flex align-items-center justify-content-end">Quick Develop<svg width="10" height="11"><use href="#dn"/></svg></h2>
        <div class="well dim">
          <div class="rowx thin r32 d-flex align-items-center"><label for="s1">Saved Preset</label><div class="pick sm ms-auto d-flex"><select id="s1" class="flex-grow-1"><option>User Presets</option></select><span class="d-flex align-items-center justify-content-center"><svg width="6" height="9"><use href="#ud"/></svg></span></div><svg class="text-white" width="10" height="11"><use href="#dn"/></svg></div>
          <div class="rowx thick endgap r54 d-flex flex-column justify-content-center gap-2">
            <div class="d-flex align-items-center justify-content-end gap-1"><label for="s2">Crop Ratio</label><div class="pick sm d-flex"><select id="s2" class="flex-grow-1"><option>Enter Custom...</option></select><span class="d-flex align-items-center justify-content-center"><svg width="6" height="9"><use href="#ud"/></svg></span></div></div>
            <div class="d-flex align-items-center justify-content-end gap-1"><label for="s3">Treatment</label><div class="pick sm d-flex"><select id="s3" class="flex-grow-1"><option></option></select><span class="d-flex align-items-center justify-content-center"><svg width="6" height="9"><use href="#ud"/></svg></span></div></div>
          </div>
          <div class="rowx thick r33 d-flex align-items-center"><label for="s4">White Balance</label><div class="pick sm ms-auto d-flex"><select id="s4" class="flex-grow-1"><option></option></select><span class="d-flex align-items-center justify-content-center"><svg width="6" height="9"><use href="#ud"/></svg></span></div><svg class="text-white" width="10" height="11"><use href="#lf"/></svg></div>
          <div class="rowx thin r32 d-flex align-items-center"><span>Tone Control</span><button class="sbtn ms-auto" style="margin-right:30px">Auto</button><svg class="text-white" width="10" height="11"><use href="#lf"/></svg></div>
          <div class="rowx thin r29 d-flex align-items-center justify-content-end"><span>Exposure</span><div class="steps d-flex"><button aria-label="Much less"><svg width="10" height="6"><use href="#s2l"/></svg></button><button aria-label="Less"><svg width="5" height="8"><use href="#s1l"/></svg></button><button aria-label="More"><svg width="5" height="8"><use href="#s1r"/></svg></button><button aria-label="Much more"><svg width="10" height="6"><use href="#s2r"/></svg></button></div></div>
          <div class="thin r56 d-flex flex-column justify-content-center gap-2">
            <div class="rowx d-flex align-items-center justify-content-end"><span>Clarity</span><div class="steps d-flex"><button aria-label="Much less"><svg width="10" height="6"><use href="#s2l"/></svg></button><button aria-label="Less"><svg width="5" height="8"><use href="#s1l"/></svg></button><button aria-label="More"><svg width="5" height="8"><use href="#s1r"/></svg></button><button aria-label="Much more"><svg width="10" height="6"><use href="#s2r"/></svg></button></div></div>
            <div class="rowx d-flex align-items-center justify-content-end"><span>Vibrance</span><div class="steps d-flex"><button aria-label="Much less"><svg width="10" height="6"><use href="#s2l"/></svg></button><button aria-label="Less"><svg width="5" height="8"><use href="#s1l"/></svg></button><button aria-label="More"><svg width="5" height="8"><use href="#s1r"/></svg></button><button aria-label="Much more"><svg width="10" height="6"><use href="#s2r"/></svg></button></div></div>
          </div>
          <div class="rowx endgap r31 d-flex align-items-center justify-content-end"><button class="sbtn">Reset All</button></div>
        </div>
        <h2 class="phead d-flex align-items-center justify-content-end">Keywording<svg width="10" height="11"><use href="#dn"/></svg></h2>
        <div class="well bright">
          <div class="rowx thin r32 d-flex align-items-center"><label for="s5">Keyword Tags</label><div class="pick light wide ms-auto d-flex"><select id="s5" class="flex-grow-1"><option>Enter Keywords</option></select><span class="d-flex align-items-center justify-content-center"><svg width="6" height="9"><use href="#ud"/></svg></span></div><svg class="text-white" width="10" height="11"><use href="#dn"/></svg></div>
          <div class="thick" style="height:130px"></div>
          <div class="rowx thin r32 d-flex align-items-center justify-content-between"><span>Keyword Suggestions</span><svg class="text-white" width="10" height="11"><use href="#dn"/></svg></div>
          <div class="kgrid"><button>Sky</button><button>clouds</button><button>big bend</button><button>steve indian</button><button>texas</button><button>mountain</button><button>esme amazing photos 2014</button><button>esme</button><button>Photo Stream</button></div>
          <div class="rowx thin r32 d-flex align-items-center" style="border-top:1px solid #000"><label for="s6">Keyword Set</label><div class="pick light wide ms-auto d-flex"><select id="s6" class="flex-grow-1"><option>Custom</option></select><span class="d-flex align-items-center justify-content-center"><svg width="6" height="9"><use href="#ud"/></svg></span></div><svg class="text-white" width="10" height="11"><use href="#dn"/></svg></div>
          <div class="kgrid"><button>suzanne china</button><button>Snaps 08082014</button><button>esme amazing photos 2014</button><button></button><button></button><button></button><button></button><button></button><button></button></div>
        </div>
        <h2 class="phead h29 d-flex align-items-center justify-content-end"><button class="me-auto" aria-label="Add keyword"><svg width="16" height="14"><use href="#plus"/></svg></button>Keyword List<svg width="10" height="11"><use href="#lf"/></svg></h2>
        <div class="groove"></div>
        <div class="phead h29 d-flex align-items-center"><svg width="13" height="10" viewBox="0 0 13 10"><path d="M0 5c3-5 8-5 12 0-4 5-9 5-12 0z" fill="#999"/><circle cx="6" cy="5" r="2.500" fill="none" stroke="#333"/></svg>
          <div class="pick meta d-flex ms-1 mb-1"><select aria-label="Metadata view" class="flex-grow-1"><option>Default</option></select><span class="d-flex align-items-center justify-content-center"><svg width="6" height="9"><use href="#ud"/></svg></span></div>
          <h2 class="ms-auto">Metadata</h2><svg width="10" height="11"><use href="#dn"/></svg></div>
        <div class="well flex-grow-1"></div>
        <div class="d-flex justify-content-center" style="height:8px;padding-top:3px"><svg width="5" height="3" viewBox="0 0 5 3"><path d="M0 0h5L2.500 3z" fill="#888"/></svg></div>
        <div class="btnrow d-flex"><button class="lrbtn lit d-flex align-items-stretch col"><span class="d-flex align-items-center justify-content-center" style="width:20px;border-right:1px solid #000"><svg width="9" height="14" viewBox="0 0 9 14"><path d="M.5.500h8v13h-8zM.5 7h8" fill="none" stroke="#000"/></svg></span><span class="flex-grow-1">Sync</span></button><button class="lrbtn col">Sync Settings</button></div>
      </aside>
      <div class="rail d-flex flex-column align-items-end"><div class="stripes" style="height:178px"></div><div style="width:9px;height:688px;margin-top:2px;border-radius:2px;background:linear-gradient(90deg,#777,#aaa,#888)"></div><div class="stripes mt-auto" style="height:41px"></div></div>
    </div>

    <div class="foot d-flex align-items-center">
      <button class="mon on">1</button><button class="mon m">2</button><span class="dots"></span>
      <svg class="m" width="16" height="15" viewBox="0 0 16 15"><path d="M0 0h6v6H0zM9 0h6v6H9zM0 9h6v6H0zM9 9h6v6H9z" fill="#555"/></svg>
      <svg width="14" height="14" viewBox="0 0 14 14"><path d="M0 7l8-7v4h5v6H8v4z" fill="#666"/></svg>
      <svg class="m" width="14" height="14" viewBox="0 0 14 14"><path d="M14 7 6 0v4H1v6h5v4z" fill="#666"/></svg><span class="dots"></span>
      <span style="margin-left:11px">Previous Import</span><button class="d-flex align-items-center text-white gap-1" style="margin-left:22px">0 photos<svg width="8" height="4" viewBox="0 0 8 4"><path d="M0 0h8L4 4z" fill="#999"/></svg></button>
      <span class="ms-auto">Filter :</span>
      <svg style="margin:0 9px" width="58" height="20" viewBox="0 0 58 20" fill="none"><path d="M11 0l6 9-7 9-7-9z" fill="#3c3c3c"/><path d="M1 8l5-3M7 12l6 8" stroke="#444" stroke-width="1.300"/><path d="M29 1l6 8-6 9-6-9z" stroke="#555" stroke-dasharray="2 2"/><path d="M49 1l6 8-6 9-6-9zM40 8l5-3M47 14l4 6" stroke="#555"/></svg>
      <span class="dots"></span>
      <svg style="margin:0 9px" width="50" height="18" viewBox="0 0 50 18"><path d="M0 3h20M0 9h20M0 15h20M6 0v6M14 6v6M7 12v6M29 4h8M43 4h6M28 15h12M44 9h5M32 0l16 18M44 6v6M36 12v6" stroke="#5c5c5c" fill="none"/></svg>
      <span class="dots"></span><span style="margin:0 7px 0 9px;font-size:16px">≥</span>
      <span class="d-flex" style="gap:3px"><svg width="16" height="16"><use href="#star"/></svg><svg width="16" height="16"><use href="#star"/></svg><svg width="16" height="16"><use href="#star"/></svg><svg width="16" height="16"><use href="#star"/></svg><svg width="16" height="16"><use href="#star"/></svg></span>
      <span class="dots m"></span>
      <span class="d-flex" style="gap:5px"><button class="sw" aria-label="Red" style="background:#3f1214"></button><button class="sw" aria-label="Yellow" style="background:#3b3a0c"></button><button class="sw" aria-label="Green" style="background:#123014"></button><button class="sw" aria-label="Blue" style="background:#10203f"></button><button class="sw" aria-label="Purple" style="background:#231440"></button><button class="sw" aria-label="White" style="background:#444"></button><button class="sw" aria-label="None" style="background:#202020"></button></span>
      <span class="dots m"></span>
      <div class="pick flt d-flex"><select aria-label="Filmstrip filter" class="flex-grow-1"><option>Filters Off</option></select><span class="d-flex align-items-center justify-content-center"><svg width="6" height="9"><use href="#ud"/></svg></span></div>
      <button aria-label="Filter switch" style="margin-left:9px"><svg width="11" height="16" viewBox="0 0 11 16"><path d="M.5.500h10v15H.5z" fill="#111" stroke="#999"/><path d="M2 8h7v6H2z" fill="#bbb"/></svg></button>
    </div>
    <div class="film"><div></div></div>

    <button class="edge top-0 start-50 translate-middle-x" style="padding-top:32px" aria-label="Hide module picker"><svg width="13" height="7" viewBox="0 0 13 7"><path d="M6.500 0 13 7H0z" fill="currentColor"/></svg></button>
    <button class="edge bottom-0 start-50 translate-middle-x" style="padding-bottom:3px" aria-label="Hide filmstrip"><svg width="13" height="7" viewBox="0 0 13 7"><path d="M6.500 7 13 0H0z" fill="currentColor"/></svg></button>
    <button class="edge start-0" style="top:634px;padding-left:4px" aria-label="Hide left panel"><svg width="7" height="13" viewBox="0 0 7 13"><path d="M0 6.500 7 0v13z" fill="currentColor"/></svg></button>
    <button class="edge end-0" style="top:634px;padding-right:4px" aria-label="Hide right panel"><svg width="7" height="13" viewBox="0 0 7 13"><path d="M7 6.500 0 0v13z" fill="currentColor"/></svg></button>
  </main>

  <!-- Import results dialog -->
  <section class="dlg" role="dialog" aria-labelledby="dlgt">
    <div class="dlg-t d-flex align-items-center"><div class="lights d-flex"><i></i><i></i><i class="go"></i></div><h2 id="dlgt" class="mx-auto mid-title">Import Results</h2></div>
    <div class="dlg-b">
      <p style="padding-left:3px">Some import operations were not performed.</p>
      <div class="results d-flex">
        <div class="rows flex-grow-1">
          <div class="rline d-flex"><svg style="margin-top:11px" width="8" height="6" color="#777"><use href="#chev"/></svg><span>Could not copy a file to the destination folder because it is not writable. (1)</span></div>
          <div class="rline kid d-flex"><svg style="margin-top:2px" width="18" height="22" viewBox="0 0 18 22"><path d="M1 .5h12l4.500 4v17H1z" fill="#fff" stroke="#bbb"/><path d="M4 11l5-6v3l5 1-3 4-2-2-3 1z" fill="none" stroke="#222" stroke-width="1.300"/><path d="M10 7h4v4h-3z" fill="#222"/><path d="M6 15v4H5M8 19v-4h1.500v2H8M13 15.500h-1.500v3H13V17" fill="none" stroke="#333"/></svg><span>vacation2013 076.JPG</span>
            <a href="#" class="ms-auto" style="padding-top:7px" aria-label="Show file"><svg width="12" height="12" viewBox="0 0 12 12"><circle cx="6" cy="6" r="6" fill="#a9a9a9"/><path d="M2.500 6h5M6 3l3.500 3L6 9z" fill="#fff" stroke="#fff" stroke-width="1.300"/></svg></a></div>
        </div>
        <div style="width:14px;background:#fafafa"></div>
      </div>
      <div class="d-flex justify-content-between" style="padding:18px 4px 0"><button class="macbtn">Save As...</button><button class="macbtn ok">OK</button></div>
    </div>
  </section>
</div>
<script src="https://cdn.jsdelivr.net/npm/bootstrap@5.3.0/dist/js/bootstrap.bundle.min.js"></script>
</body>
</html>
